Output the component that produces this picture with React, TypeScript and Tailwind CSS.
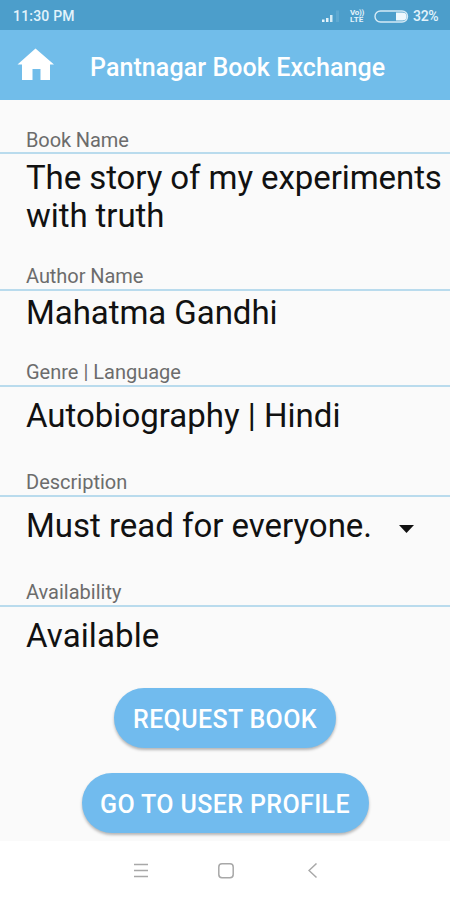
import React from 'react';
import { clsx } from 'clsx';

const bookFields = [
  {
    label: 'Book Name',
    value: 'The story of my experiments with truth',
    height: 'h-[137px]',
    labelStyle: 'leading-6 tracking-[-0.1px]',
    valueStyle: 'tracking-[-0.08px]',
    valueGap: 'pt-[5px]',
  },
  {
    label: 'Author Name',
    value: 'Mahatma Gandhi',
    height: 'h-[96px]',
    labelStyle: 'leading-[23px] tracking-[-0.05px]',
    valueStyle: 'tracking-[-0.05px]',
    valueGap: 'pt-[3px]',
  },
  {
    label: 'Genre | Language',
    value: 'Autobiography | Hindi',
    height: 'h-[110px]',
    labelStyle: 'leading-[23px] tracking-normal',
    valueStyle: 'tracking-normal',
    valueGap: 'pt-[10px]',
  },
  {
    label: 'Description',
    value: 'Must read for everyone.',
    height: 'h-[110px]',
    labelStyle: 'leading-[23px] tracking-normal',
    valueStyle: 'tracking-[-0.02px]',
    valueGap: 'pt-[10px]',
    expandable: true,
  },
  {
    label: 'Availability',
    value: 'Available',
    height: 'h-[107px]',
    labelStyle: 'leading-[23px] tracking-normal',
    valueStyle: 'tracking-[0.1px]',
    valueGap: 'pt-[10px]',
  },
];

const StatusBar = () => (
  <div className="flex h-[30px] items-center bg-[#4c9ecb] pl-[13px] pr-3 pt-[2px] text-[14px] font-medium text-[#e3f3fb]">
    <span className="tracking-[0.2px]">11:30 PM</span>

    <svg className="ml-auto h-[13px] w-[19px]" viewBox="0 0 19 13" fill="currentColor">
      <rect x="1" y="9.5" width="2.5" height="2.5" />
      <rect x="5" y="8" width="2.5" height="4" />
      <rect x="9" y="5" width="2.5" height="7" opacity="0.9" />
      <rect x="15" y="0.5" width="3" height="11.5" opacity="0.12" />
    </svg>

    <span className="ml-[10px] flex w-[15px] flex-col text-[8px] font-bold leading-[7px]">
      <span className="h-[7px] tracking-[-0.3px]">Vo))</span>
      <span className="h-[7px] tracking-[0.2px]">LTE</span>
    </span>

    <svg className="ml-[9px] h-[13px] w-[35px]" viewBox="0 0 35 13">
      <rect x="1" y="1" width="32.5" height="11" rx="5.5" fill="none" stroke="#d4eaf6" strokeWidth="1.4" />
      <path d="M22 2.4h6.5a4 4 0 0 1 0 8.2H22z" fill="#eef8fd" />
    </svg>

    <span className="ml-1 w-[25px] whitespace-nowrap tracking-[-0.3px]">32%</span>
  </div>
);

const Header = () => (
  <header className="flex h-[70px] items-center bg-[#71bdea] pl-[17px] text-white">
    <svg className="mt-[-1px] h-[33px] w-[37px]" viewBox="0 0 37 33" fill="currentColor">
      <path d="M18.5 0.5L37 16.5h-4v15.5h-9.5V21h-8v11H5V16.5H0.5z" />
    </svg>
    <h1 className="ml-9 mt-[5px] whitespace-nowrap text-[25px] font-medium leading-8 tracking-[0.08px]">
      Pantnagar Book Exchange
    </h1>
  </header>
);

const NavigationBar = () => (
  <nav className="flex h-[59px] items-center bg-white pl-[134px] text-[#a8a8a8]">
    <svg className="h-4 w-[14px]" viewBox="0 0 14 16" fill="none" stroke="currentColor" strokeWidth="1.4">
      <path d="M0 1.5h14M0 7.5h14M0 13.5h14" />
    </svg>
    <svg className="ml-[70px] h-4 w-4" viewBox="0 0 16 16" fill="none" stroke="currentColor" strokeWidth="1.5">
      <rect x="0.8" y="0.8" width="14.4" height="13.9" rx="3.2" />
    </svg>
    <svg className="ml-[74px] h-4 w-[10px]" viewBox="0 0 10 16" fill="none" stroke="currentColor" strokeWidth="1.5">
      <path d="M8.5 0.5L1 7.5L8.5 14.5" />
    </svg>
  </nav>
);

const buttonClass =
  'h-[60px] whitespace-nowrap rounded-full bg-[#71bbee] pt-[3px] text-[25px] font-medium text-white shadow-[0_2px_3px_rgba(0,0,0,0.28)]';

const App = () => {
  return (
    <div className="flex h-[900px] w-[450px] flex-col overflow-hidden bg-[#fafafa] font-['Roboto',sans-serif]">
      <StatusBar />
      <Header />

      <main className="flex h-[741px] flex-col pt-7">
        {bookFields.map((field) => (
          <section key={field.label} className={clsx('shrink-0', field.height)}>
            <h2
              className={clsx(
                'h-[26px] border-b-2 border-[#b9dbed] pl-[26px] text-[20px] text-[#6c6c6c]',
                field.labelStyle
              )}
            >
              {field.label}
            </h2>
            <div className={clsx('flex items-center pl-[26px]', field.valueGap)}>
              <p className={clsx('text-[33px] leading-[38px] text-[#111111]', field.valueStyle)}>
                {field.value}
              </p>
              {field.expandable && (
                <svg className="ml-[27px] mt-[5px] h-2 w-4" viewBox="0 0 16 8" fill="#111111">
                  <path d="M0 0h15L7.5 8z" />
                </svg>
              )}
            </div>
          </section>
        ))}

        {/* ACTIONS */}
        <div className="flex flex-col items-center gap-[25px]">
          <button className={clsx(buttonClass, 'w-[222px] tracking-[0.36px]')}>REQUEST BOOK</button>
          <button className={clsx(buttonClass, 'w-[287px] tracking-[0.38px]')}>GO TO USER PROFILE</button>
        </div>
      </main>

      <NavigationBar />
    </div>
  );
};

export default App;
